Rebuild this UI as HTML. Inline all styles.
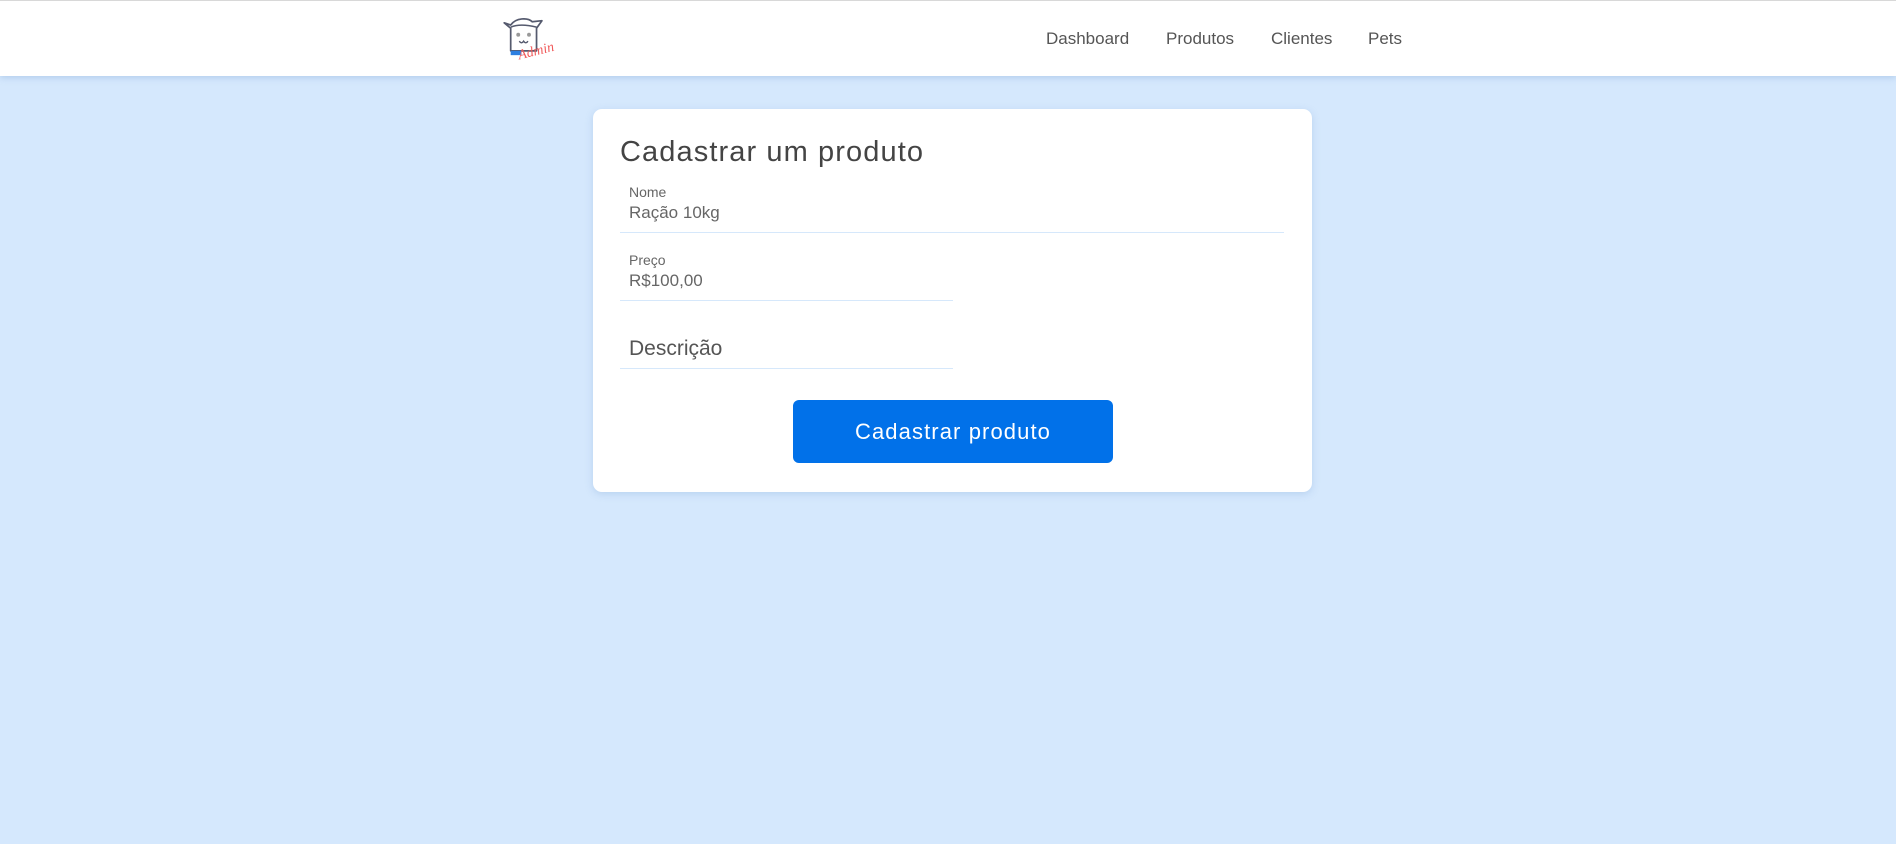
<!DOCTYPE html>
<html><head><meta charset="utf-8"><style>
*{margin:0;padding:0;box-sizing:border-box}
body{width:1896px;height:844px;background:#d5e8fd;font-family:"Liberation Sans",sans-serif;position:relative;overflow:hidden}
.nav{position:absolute;left:0;top:0;width:1896px;height:76px;background:#fff;border-top:1px solid #d8d8d8;box-shadow:0 2px 6px rgba(120,160,210,.35)}
.nav a{position:absolute;top:28px;font-size:17px;color:#555;text-decoration:none}
.card{position:absolute;left:593px;top:109px;width:719px;height:383px;background:#fff;border-radius:9px;box-shadow:0 2px 8px rgba(120,160,210,.3)}
.t{position:absolute;color:#444}
.line{position:absolute;height:1px;background:#d6e8fb}
.btn{position:absolute;left:200px;top:291px;width:320px;height:63px;background:#0171e9;border-radius:6px;color:#fff;font-size:22px;letter-spacing:1.1px;text-align:center;line-height:63px}
</style></head><body>
<div class="nav">
<svg style="position:absolute;left:501px;top:14px" width="56" height="48" viewBox="0 0 52 44">
<path d="M3 7 L9 9 C14 2 25 2 29 6 L38 5 L33 12 L33 33 L9 33 L9 12 Z" fill="#fff" stroke="#555a6e" stroke-width="1.6" stroke-linejoin="round"/>
<path d="M9 11 C16 8 25 9 33 11" fill="none" stroke="#555a6e" stroke-width="1.4"/>
<circle cx="16" cy="18" r="1.8" fill="#999"/><circle cx="26" cy="18" r="1.8" fill="#999"/>
<path d="M17 24 Q19 27 21 24 Q23 27 25 24" fill="none" stroke="#555a6e" stroke-width="1.3"/>
<rect x="9" y="33" width="10" height="4" fill="#2e7fe0"/>
<text x="17" y="41" font-family="Liberation Serif,serif" font-style="italic" font-size="13" fill="#f05a5a" transform="rotate(-14 17 41)">Admin</text>
</svg>
<a style="left:1046px">Dashboard</a>
<a style="left:1166px">Produtos</a>
<a style="left:1271px">Clientes</a>
<a style="left:1368px">Pets</a>
</div>
<div class="card">
<div class="t" style="left:27px;top:27px;font-size:29px;letter-spacing:1.1px">Cadastrar um produto</div>
<div class="t" style="left:36px;top:75px;font-size:14px;color:#666">Nome</div>
<div class="t" style="left:36px;top:94px;font-size:17px;color:#666">Ração 10kg</div>
<div class="line" style="left:27px;top:123px;width:664px"></div>
<div class="t" style="left:36px;top:143px;font-size:14px;color:#666">Preço</div>
<div class="t" style="left:36px;top:162px;font-size:17px;color:#666">R$100,00</div>
<div class="line" style="left:27px;top:191px;width:333px"></div>
<div class="t" style="left:36px;top:228px;font-size:21px;color:#555">Descrição</div>
<div class="line" style="left:27px;top:259px;width:333px"></div>
<div class="btn">Cadastrar produto</div>
</div>
</body></html>
